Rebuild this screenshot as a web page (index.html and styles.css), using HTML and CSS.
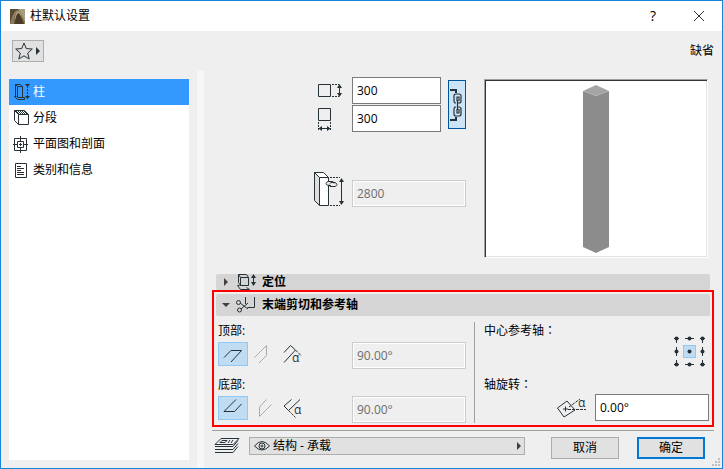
FILE: index.html
```html
<!DOCTYPE html>
<html lang="zh-CN">
<head>
    <meta charset="UTF-8">
    <meta name="viewport" content="width=device-width, initial-scale=1.0">
    <title>柱默认设置</title>
    <link rel="stylesheet" href="styles.css">
</head>
<body>
    <div class="dialog">
        <header class="titlebar">
            <svg class="app-icon" width="15" height="15" viewBox="0 0 15 15">
                <rect width="15" height="15" fill="#5a4a32"/>
                <path d="M8 0h7v15z" fill="#a89c80"/>
                <path d="M0 15C2 7 4 2 7 1c3 1 6 6 8 12v2h-2C11 8 9 4 8 3c-3 3-3 7-4 12z" fill="#8c7a58"/>
                <path d="M5 11C5 7 6 3 8 2c2 2 3 4 4 6-2-2-3-3-4-3-1 1-2 3-3 6z" fill="#b5a681"/>
                <path d="M5 15C6 9 6 6 8 4c2 1 4 5 6 11z" fill="#4a3d28"/>
            </svg>
            <h1>柱默认设置</h1>
            <button type="button" class="caption-btn" aria-label="帮助">?</button>
            <button type="button" class="caption-btn" aria-label="关闭">
                <svg class="icon" width="12" height="12" viewBox="0 0 12 12"><path d="M1 1l10 10M11 1L1 11"/></svg>
            </button>
        </header>

        <div class="toolbar">
            <button type="button" class="favorites" aria-label="收藏夹">
                <svg class="icon" width="26" height="18" viewBox="0 0 26 18">
                    <path d="M9 1l2.300 5.600 6 .4-4.600 4 1.500 6L9 13.800 3.800 17l1.500-6L.7 7l6-.4z"/>
                    <path class="fill" d="M21 5l4 4-4 4z"/>
                </svg>
            </button>
            <span>缺省</span>
        </div>

        <div class="content">
            <nav class="pages">
                <a href="#column" class="page active">
                    <svg class="icon" width="18" height="18" viewBox="0 0 18 18">
                        <path d="M4.500 3.500h5v11h-5zM4.500 3.500l-2-2h5l2 2M2.500 1.500v12M9.500 14.500h2v2h-7l-3-3h2" />
                        <path stroke-dasharray="2 1" d="M14.500 3v11"/>
                        <path class="fill" d="M12 1h5l-2.500 3zM12 13h5l-2.500 3z"/>
                    </svg>
                    柱
                </a>
                <a href="#segments" class="page">
                    <svg class="icon" width="18" height="18" viewBox="0 0 18 18">
                        <path d="M5.500 5.500h10v10h-10zM5.500 5.500l-4-4M5.500 15.500l-4-4v-10h10l4 4"/>
                        <path stroke-dasharray="1 1" d="M3 2.500h9M4 3.500h9M5 4.500h9"/>
                    </svg>
                    分段
                </a>
                <a href="#plan" class="page">
                    <svg class="icon" width="18" height="18" viewBox="0 0 18 18">
                        <path d="M1.500 3.500h12v12h-12zM4.500 6.500h6v6h-6zM7.500 1v5M7.500 13v5M0 9.500h4M11 9.500h4M7.500 8v3M6 9.500h3"/>
                    </svg>
                    平面图和剖面
                </a>
                <a href="#info" class="page">
                    <svg class="icon" width="18" height="18" viewBox="0 0 18 18">
                        <path d="M2.500 2.500h11v14h-11zM4 5.500h4M4 7.500h7M4 9.500h4M4 11.500h7M4 13.500h7"/>
                    </svg>
                    类别和信息
                </a>
            </nav>
            <div class="splitter"></div>

            <main class="settings">
                <section class="geometry">
                    <div class="dimensions">
                        <label for="depth">
                            <svg class="icon" width="28" height="16" viewBox="0 0 28 16" role="img" aria-label="深度">
                                <path d="M2.500 1.500h12v12h-12zM23.500 2v11"/>
                                <path stroke-dasharray="2 1" d="M16 1.500h7M16 13.500h7"/>
                                <path class="fill" d="M21 5l2.500-4L26 5zM21 10l2.500 4 2.500-4z"/>
                            </svg>
                        </label>
                        <input type="text" id="depth" value="300">
                        <label for="width">
                            <svg class="icon" width="28" height="24" viewBox="0 0 28 24" role="img" aria-label="宽度">
                                <path d="M2.500 1.500h12v12h-12zM4 21.500h9"/>
                                <path stroke-dasharray="2 1" d="M2.500 15v8M14.500 15v8"/>
                                <path class="fill" d="M6 19l-3.500 2.500L6 24zM11 19l3.500 2.500L11 24z"/>
                            </svg>
                        </label>
                        <input type="text" id="width" value="300">
                        <button type="button" class="link-btn" aria-label="锁定比例">
                            <svg class="icon" width="14" height="36" viewBox="0 0 14 36">
                                <path stroke-width="2" d="M1 3h6v3M1 33h6v-3"/>
                                <path stroke-width="1.200" d="M7 16H6q-1-1-1-2V9q0-2 2-2h3q2 0 2 2v5q0 2-2 2h-1M8 14v-4h2v4M7 20H6q-1 1-1 2v5q0 2 2 2h3q2 0 2-2v-5q0-2-2-2h-1M8 22v4h2v-4M8.500 13v10"/>
                            </svg>
                        </button>
                        <label for="height" class="height-label">
                            <svg class="icon" width="32" height="36" viewBox="2 0 32 36" role="img" aria-label="高度">
                                <path fill="#ddd" d="M.500 1.500l5 5v28l-5-5z"/>
                                <path fill="#fff" d="M.500 1.500h9l5 5h-9zM5.500 6.500h9v28h-9z"/>
                                <path stroke-dasharray="2 1" d="M16 6.500h10M16 34.500h10"/>
                                <path d="M27.500 8v25"/>
                                <path class="fill" d="M25 11l2.500-4 2.500 4zM25 30l2.500 4 2.500-4z"/>
                                <path stroke="#efefef" stroke-width="5" d="M12 12.500h10"/>
                                <path d="M17 14.500h-3q-2-1-2-2t2-2h4q2 0 2 2M16 12.500q0-1 2-1h3q2 1 2 2t-2 2h-4q-2 0-2-2"/>
                            </svg>
                        </label>
                        <input type="text" id="height" value="2800" disabled>
                    </div>
                    <div class="preview">
                        <svg width="28" height="168" viewBox="0 0 28 168" role="img" aria-label="预览">
                            <path fill="#8c8c8c" d="M1 6l13 5 13-5v156l-13 6-13-6z"/>
                            <path fill="#a5a5a5" d="M1 6l13-6 13 6-13 5z"/>
                        </svg>
                    </div>
                </section>

                <button type="button" class="panel-header compact" aria-expanded="false">
                    <svg class="arrow" width="10" height="10" viewBox="0 0 10 10"><path d="M3 1l4 4-4 4z"/></svg>
                    <svg class="icon" width="21" height="16" viewBox="0 0 21 16">
                        <path d="M4.500 3.500h8v8h-8zM4.500 3.500l-2-3h8l2 3M2.500 .5v8l2 3M1.500 11.500l3 4h9l-3-2M1.500 11.500h2M17.500 2v9"/>
                        <path class="fill" d="M15 4l2.500-4L20 4zM15 8l2.500 4L20 8z"/>
                    </svg>
                    定位
                </button>

                <section class="panel">
                    <button type="button" class="panel-header" aria-expanded="true">
                        <svg class="arrow" width="10" height="10" viewBox="0 0 10 10"><path d="M1 3h8L5 7z"/></svg>
                        <svg class="icon" width="21" height="16" viewBox="0 0 21 16">
                            <path d="M4 6l8 6M5 12l7-6M9.500 0v7M18.500 0v10.500h-7"/>
                            <circle cx="2.500" cy="5.500" r="2"/><circle cx="3.500" cy="13" r="2"/>
                        </svg>
                        末端剪切和参考轴
                    </button>

                    <div class="panel-body">
                        <div class="cuts">
                            <label for="top-angle">顶部:</label>
                            <div class="cut-row">
                                <button type="button" class="cut selected" aria-label="水平">
                                    <svg class="icon" width="20" height="20" viewBox="0 0 20 20"><path d="M1 13.500L8 6.500h10.500L8 18"/></svg>
                                </button>
                                <button type="button" class="cut" aria-label="垂直">
                                    <svg class="icon muted" width="20" height="20" viewBox="0 0 20 20"><path d="M1.500 13.500l12-12v10L6 19"/></svg>
                                </button>
                                <button type="button" class="cut" aria-label="自定义">
                                    <svg class="icon" width="20" height="20" viewBox="0 0 20 20">
                                        <path d="M1 8.500l6.500-7L12.500 6 1 18.500"/><path stroke-dasharray="3 1" d="M12.500 6l6 6"/>
                                        <text x="9" y="18">α</text>
                                    </svg>
                                </button>
                                <input type="text" id="top-angle" value="90.00°" disabled>
                            </div>
                            <label for="bottom-angle">底部:</label>
                            <div class="cut-row">
                                <button type="button" class="cut selected" aria-label="水平">
                                    <svg class="icon" width="20" height="20" viewBox="0 0 20 20"><path d="M13 1.500l-12 12h10.500L18.500 6"/></svg>
                                </button>
                                <button type="button" class="cut" aria-label="垂直">
                                    <svg class="icon muted" width="20" height="20" viewBox="0 0 20 20"><path d="M13.500 1.500l-7 7.500v9.500l12-12"/></svg>
                                </button>
                                <button type="button" class="cut" aria-label="自定义">
                                    <svg class="icon" width="20" height="20" viewBox="0 0 20 20">
                                        <path d="M8.500 1.500L1 8l4.500 4.500 11.500-11"/><path stroke-dasharray="3 1" d="M5.500 12.500l7 7"/>
                                        <text x="11" y="16">α</text>
                                    </svg>
                                </button>
                                <input type="text" id="bottom-angle" value="90.00°" disabled>
                            </div>
                        </div>

                        <div class="axis">
                            <div class="anchor-row">
                                <span>中心参考轴<span class="colon" lang="zh-TW">：</span></span>
                                <div class="anchor">
                                    <svg class="icon" width="32" height="32" viewBox="0 0 32 32">
                                        <rect class="anchor-mark" x="9.500" y="9.500" width="12" height="12"/>
                                        <path d="M0 2.500h5M2.500 2v5M11 2.500h9M26 2.500h5M28.500 2v5M2.500 11v9M28.500 11v9M0 28.500h5M2.500 24v5M11 28.500h9M26 28.500h5M28.500 24v5"/>
                                        <g class="fill">
                                            <circle cx="2.500" cy="2.500" r="2"/><circle cx="15.500" cy="2.500" r="2"/><circle cx="28.500" cy="2.500" r="2"/>
                                            <circle cx="2.500" cy="15.500" r="2"/><circle cx="15.500" cy="15.500" r="2"/><circle cx="28.500" cy="15.500" r="2"/>
                                            <circle cx="2.500" cy="28.500" r="2"/><circle cx="15.500" cy="28.500" r="2"/><circle cx="28.500" cy="28.500" r="2"/>
                                        </g>
                                    </svg>
                                    <div class="anchor-points">
                                        <input type="radio" name="anchor" aria-label="左上">
                                        <input type="radio" name="anchor" aria-label="上">
                                        <input type="radio" name="anchor" aria-label="右上">
                                        <input type="radio" name="anchor" aria-label="左">
                                        <input type="radio" name="anchor" aria-label="中心" checked>
                                        <input type="radio" name="anchor" aria-label="右">
                                        <input type="radio" name="anchor" aria-label="左下">
                                        <input type="radio" name="anchor" aria-label="下">
                                        <input type="radio" name="anchor" aria-label="右下">
                                    </div>
                                </div>
                            </div>
                            <label for="rotation">轴旋转<span class="colon" lang="zh-TW">：</span></label>
                            <div class="rotation-row">
                                <svg class="icon" width="32" height="22" viewBox="0 0 32 22">
                                    <path d="M1.500 11L11 4l8 9-11 7zM9.500 9.500v5M7 12h5"/>
                                    <path stroke-dasharray="3 1" d="M12 12.500h18M13 10L24 2"/>
                                    <text x="22" y="10">α</text>
                                </svg>
                                <input type="text" id="rotation" value="0.00°">
                            </div>
                        </div>
                    </div>
                </section>

                <footer class="footer">
                    <svg class="icon" width="26" height="17" viewBox="0 0 26 17">
                        <path fill="#efefef" d="M1 15.500h18l5-6"/>
                        <path fill="#efefef" d="M1 12.500h18l5-6"/>
                        <path fill="#efefef" d="M1 9.500h18l5-6"/>
                        <path fill="#efefef" d="M1 7.500l6-6h18l-6 6z"/>
                        <path d="M8 3.500h5l-2 2H6zM16 3l-2 3M19 3l-2 3"/>
                    </svg>
                    <div class="layer">
                        <svg class="icon layer-eye" width="16" height="12" viewBox="0 0 16 12">
                            <path d="M.5 6Q8-3 15.500 6 8 14 .5 6z"/><circle cx="8" cy="6" r="3"/><circle cx="8" cy="6" r="1"/>
                        </svg>
                        <select aria-label="图层">
                            <option>结构 - 承载</option>
                        </select>
                        <svg class="layer-arrow" width="6" height="8" viewBox="0 0 6 8"><path d="M1 0l4 4-4 4z"/></svg>
                    </div>
                    <button type="button" class="btn">取消</button>
                    <button type="submit" class="btn primary">确定</button>
                </footer>
            </main>
        </div>
        <svg class="grip" width="9" height="9" viewBox="0 0 9 9"><path d="M6 0h2v2H6zM3 3h2v2H3zM6 3h2v2H6zM0 6h2v2H0zM3 6h2v2H3zM6 6h2v2H6z"/></svg>
    </div>
</body>
</html>
```
FILE: styles.css
```css
* {
    box-sizing: border-box;
}

body {
    margin: 0;
    font: 12px/18px "Open Sans", "Noto Sans CJK SC", sans-serif;
    color: #000;
}

button,
input,
select {
    font: inherit;
    color: inherit;
    margin: 0;
    padding: 0;
    border-radius: 0;
}

svg {
    display: block;
    flex: none;
    overflow: visible;
}

.icon {
    fill: none;
    stroke: #263238;
    stroke-width: 1;
}

.icon .fill {
    fill: #263238;
    stroke: none;
}

.icon text {
    fill: #263238;
    stroke: none;
    font-size: 12px;
}

.icon.muted {
    stroke: #aaa;
}

.dialog {
    position: relative;
    display: flex;
    flex-direction: column;
    min-height: 100vh;
    background: #efefef;
    border: 1px solid #1883d7;
}

.titlebar {
    display: flex;
    align-items: center;
    height: 30px;
    padding-left: 9px;
    background: #fff;
}

.titlebar h1 {
    flex: 1;
    margin: 0 0 0 5px;
    font-size: 12px;
    font-weight: normal;
}

.caption-btn {
    display: flex;
    align-items: center;
    justify-content: center;
    width: 46px;
    height: 30px;
    border: none;
    background: none;
    font-size: 14px;
}

.toolbar {
    display: flex;
    align-items: center;
    justify-content: space-between;
    height: 40px;
    padding: 0 8px 0 11px;
}

.favorites {
    display: flex;
    align-items: center;
    justify-content: center;
    width: 32px;
    height: 22px;
    border: 1px solid #adadad;
    background: #e1e1e1;
}

.content {
    flex: 1;
    display: flex;
}

.pages {
    width: 180px;
    margin: 8px;
    background: #fff;
}

.page {
    display: flex;
    align-items: center;
    gap: 2px;
    height: 26px;
    padding-left: 4px;
    color: #000;
    text-decoration: none;
}

.page.active {
    background: #3399ff;
    color: #fff;
}

.splitter {
    width: 7px;
    background: #f7f7f7;
}

.settings {
    flex: 1;
    display: flex;
    flex-direction: column;
    padding: 6px 8px 8px;
}

.geometry {
    display: grid;
    grid-template-columns: 1fr 224px;
    gap: 18px;
    padding-right: 6px;
}

.dimensions {
    justify-self: end;
    display: grid;
    grid-template-columns: 36px 89px 25px;
    row-gap: 1px;
    align-content: start;
    align-items: center;
}

input[type="text"] {
    width: 100%;
    height: 27px;
    padding-left: 4px;
    border: 1px solid #7a7a7a;
    background: #fff;
}

input[type="text"]:disabled {
    border-color: #ccc;
    background: #efefef;
    box-shadow: inset 0 0 0 1px #fff;
    color: #6d6d6d;
}

.link-btn {
    grid-column: 3;
    grid-row: 1 / span 2;
    justify-self: end;
    display: flex;
    align-items: center;
    width: 18px;
    height: 49px;
    border: 1px solid #005499;
    background: #cce4f7;
}

.height-label {
    margin-top: 38px;
}

#height {
    grid-column: 2 / span 2;
    margin-top: 46px;
}

.preview {
    display: flex;
    justify-content: center;
    height: 179px;
    margin: 2px 0 16px;
    padding-top: 5px;
    background: #fff;
    border: 1px solid #fff;
    border-top: 1px solid #a0a0a0;
    border-left: 1px solid #a0a0a0;
    box-shadow: inset 1px 1px 0 #333, inset -1px -1px 0 #e3e3e3;
}

.panel-header {
    display: flex;
    align-items: center;
    width: 100%;
    height: 22px;
    padding-left: 5px;
    gap: 5px;
    border: none;
    border-radius: 2px;
    background: #d5d5d5;
    font-weight: bold;
}

.panel-header.compact {
    width: auto;
    height: 16px;
    margin: 0 4px;
}

.arrow,
.layer-arrow,
.grip {
    fill: #404040;
}

.panel {
    padding: 2px;
    border: 2px solid #ff0000;
}

.panel-body {
    display: grid;
    grid-template-columns: 1fr 235px;
    gap: 8px;
    padding: 6px 1px 0 2px;
}

.cuts label,
.axis label {
    display: block;
}

.cut-row {
    display: flex;
    height: 27px;
    margin: 2px 0 7px;
}

.cut-row:last-child {
    margin-bottom: 0;
}

.cut-row input[type="text"] {
    width: 114px;
    margin-left: auto;
}

.cut {
    display: flex;
    align-items: center;
    justify-content: center;
    width: 30px;
    height: 24px;
    border: 1px solid transparent;
    background: none;
}

.cut.selected {
    border-color: #90c8f6;
    background: #c0dcf3;
}

.axis {
    padding-left: 9px;
    border-left: 1px solid #a0a0a0;
}

/* full-width colon sits in the middle of its cell */
.colon {
    font-family: "Noto Sans CJK TC", sans-serif;
    line-height: 1;
}

.anchor-row {
    display: flex;
    justify-content: space-between;
    margin-bottom: 8px;
    padding-right: 3px;
}

.anchor {
    position: relative;
    width: 32px;
    margin-top: 14px;
}

.anchor .anchor-mark {
    fill: #c0dcf3;
    stroke: #90c8f6;
}

.anchor-points {
    position: absolute;
    inset: 0;
    display: grid;
    grid-template-columns: repeat(3, 1fr);
}

.anchor-points input {
    appearance: none;
}

.rotation-row {
    display: flex;
    align-items: center;
    justify-content: flex-end;
    gap: 7px;
}

.rotation-row input[type="text"] {
    width: 114px;
}

.footer {
    display: flex;
    align-items: flex-start;
    margin-top: 3px;
    padding: 6px 9px 0 2px;
    border-top: 1px solid #a0a0a0;
}

.layer {
    position: relative;
    flex: 1;
    margin: 0 8px 0 9px;
}

.layer select {
    display: block;
    width: 100%;
    height: 18px;
    padding-left: 23px;
    line-height: 16px;
    appearance: none;
    border: 1px solid #adadad;
    background: #e1e1e1;
}

.layer-eye {
    position: absolute;
    top: 3px;
    left: 5px;
}

.layer-arrow {
    position: absolute;
    top: 5px;
    right: 3px;
}

.btn {
    width: 68px;
    height: 22px;
    margin-left: 18px;
    border: 1px solid #adadad;
    background: #e1e1e1;
}

.btn.primary {
    border: 2px solid #0078d7;
}

.grip {
    position: absolute;
    right: 1px;
    bottom: 1px;
    fill: #bfbfbf;
}
```
